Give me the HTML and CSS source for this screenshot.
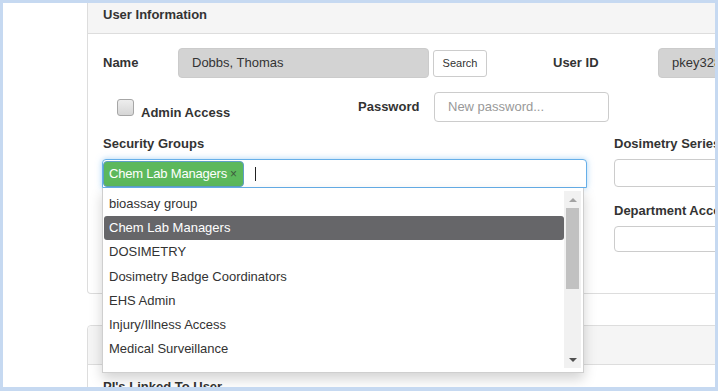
FILE: index.html
```html
<!DOCTYPE html>
<html>
<head>
<meta charset="utf-8">
<link rel="stylesheet" href="styles.css">
</head>
<body>
<div class="frame">
  <div class="panel panel-user">
    <div class="panel-heading">User Information</div>
    <div class="panel-body">
      <div class="row row-name">
        <label class="lbl lbl-name">Name</label>
        <div class="input input-ro input-name">Dobbs, Thomas</div>
        <button class="btn">Search</button>
        <label class="lbl lbl-userid">User ID</label>
        <div class="input input-ro input-userid">pkey3284</div>
      </div>
      <div class="row row-admin">
        <div class="check-group">
          <span class="checkbox"></span>
          <span class="lbl check-label">Admin Access</span>
        </div>
        <label class="lbl lbl-pass">Password</label>
        <div class="input input-pass"><span class="placeholder">New password...</span></div>
      </div>
      <div class="row row-groups">
        <div class="col-left">
          <div class="lbl col-label">Security Groups</div>
          <div class="select2">
            <span class="tag">Chem Lab Managers<span class="tag-x">×</span></span>
            <span class="cursor"></span>
            <div class="dropdown">
              <ul class="results">
                <li class="option">bioassay group</li>
                <li class="option option-active">Chem Lab Managers</li>
                <li class="option">DOSIMETRY</li>
                <li class="option">Dosimetry Badge Coordinators</li>
                <li class="option">EHS Admin</li>
                <li class="option">Injury/Illness Access</li>
                <li class="option">Medical Surveillance</li>
              </ul>
              <div class="scrollbar">
                <div class="sb-btn"><span class="arrow-up"></span></div>
                <div class="sb-thumb"></div>
                <div class="sb-space"></div>
                <div class="sb-btn sb-btn-down"><span class="arrow-down"></span></div>
              </div>
            </div>
          </div>
        </div>
        <div class="col-right">
          <div class="lbl">Dosimetry Series</div>
          <div class="input input-dos"></div>
          <div class="lbl lbl-dept">Department Access</div>
          <div class="input input-dept"></div>
        </div>
      </div>
    </div>
  </div>
  <div class="panel panel-pi">
    <div class="panel-heading heading-2"></div>
    <div class="panel-body body-2">
      <div class="lbl">PI's Linked To User</div>
    </div>
  </div>
</div>
</body>
</html>
```

FILE: styles.css
```css
* { box-sizing: border-box; }
html, body { margin: 0; padding: 0; }
body {
  font-family: "Liberation Sans", Arial, sans-serif;
  font-size: 13px;
  line-height: 18px;
  color: #333;
  background: #fff;
}
.frame {
  width: 718px;
  height: 391px;
  border-style: solid;
  border-color: #c6d9f1;
  border-width: 3px 3px 4px 3px;
  background: #fff;
  overflow: hidden;
  padding-left: 84px;
}
.panel {
  width: 660px;
  border: 1px solid #ddd;
  border-radius: 4px;
  background: #fff;
}
.panel-user {
  border-top: 0;
  border-radius: 0 0 4px 4px;
}
.panel-heading {
  height: 31px;
  padding: 3px 15px 0;
  background: #f5f5f5;
  border-bottom: 1px solid #ddd;
  font-weight: bold;
}
.panel-body {
  padding: 14px 15px 41px;
}
.lbl { font-weight: bold; white-space: nowrap; }
.row { display: flex; }
.row > *, .check-group > * { flex-shrink: 0; }
.row-name { height: 30px; align-items: center; }
.lbl-name { width: 75px; }
.input {
  border: 1px solid #ccc;
  border-radius: 4px;
  background: #fff;
  padding: 0 13px;
  white-space: nowrap;
  overflow: hidden;
}
.input-ro {
  background: #d3d3d3;
  border-color: #cbcbcb;
  height: 30px;
  line-height: 28px;
}
.input-name { width: 251px; }
.btn {
  margin-left: 4px;
  width: 54px;
  height: 27px;
  padding: 0;
  border: 1px solid #ccc;
  border-radius: 3px;
  background: #fff;
  color: #333;
  font-family: "Liberation Sans", Arial, sans-serif;
  font-size: 11px;
}
.lbl-userid { margin-left: 66px; width: 105px; }
.input-userid { width: 120px; }

.row-admin { margin-top: 14px; height: 30px; align-items: center; }
.check-group {
  width: 255px;
  display: flex;
  align-items: center;
  padding-left: 14px;
}
.checkbox {
  width: 17px;
  height: 17px;
  border: 1px solid #a6a6a6;
  border-radius: 3px;
  background: linear-gradient(#ededed, #d6d6d6);
}
.check-label { margin-left: 7px; margin-top: 11px; }
.lbl-pass { width: 76px; }
.input-pass { width: 175px; height: 30px; line-height: 28px; }
.placeholder { color: #999; }

.row-groups { margin-top: 13px; margin-left: -1px; }
.col-left { width: 485px; }
.col-label { padding-left: 1px; }
.select2 {
  position: relative;
  margin-top: 6px;
  height: 29px;
  border: 1px solid #66afe9;
  border-radius: 4px 4px 0 0;
  box-shadow: 0 0 6px rgba(102,175,233,.55);
  display: flex;
  align-items: flex-start;
  padding: 1px 0 0 0;
  background: #fff;
}
.tag {
  height: 26px;
  line-height: 24px;
  padding: 0 6px 0 5px;
  background: #5cb85c;
  border: 1px solid #5f9fc6;
  border-radius: 4px;
  color: #fff;
  white-space: nowrap;
  letter-spacing: -0.2px;
}
.tag-x {
  margin-left: 3px;
  color: #3d5a3d;
  font-size: 12px;
  letter-spacing: 0;
}
.cursor {
  margin-left: 11px;
  margin-top: 6px;
  width: 1px;
  height: 14px;
  background: #222;
}
.dropdown {
  position: absolute;
  top: 28px;
  left: -1px;
  width: 482px;
  height: 185px;
  background: #fff;
  border: 1px solid #cfcfcf;
  border-top: 0;
  box-shadow: 0 6px 12px rgba(0,0,0,.175);
  display: flex;
  z-index: 10;
}
.results {
  list-style: none;
  margin: 0 0 0 1px;
  padding: 3.75px 0 0 0;
  width: 460px;
  height: 184px;
  overflow: hidden;
}
.option {
  height: 24.25px;
  line-height: 24.25px;
  padding: 0 5px;
  white-space: nowrap;
}
.option-active {
  background: #666669;
  color: #fff;
  border-radius: 3px;
}
.scrollbar {
  width: 17px;
  height: 177px;
  margin: 3px 2px 0 0;
  background: #f1f1f1;
  display: flex;
  flex-direction: column;
}
.sb-btn {
  height: 17px;
  display: flex;
  align-items: center;
  justify-content: center;
}
.sb-btn-down { height: 16px; }
.arrow-up {
  width: 0; height: 0;
  border-left: 4px solid transparent;
  border-right: 4px solid transparent;
  border-bottom: 4px solid #a3a3a3;
}
.arrow-down {
  width: 0; height: 0;
  border-left: 4px solid transparent;
  border-right: 4px solid transparent;
  border-top: 4px solid #505050;
}
.sb-thumb {
  height: 81px;
  margin: 0 2px;
  background: #c1c1c1;
}
.sb-space { flex: 1; }

.col-right { margin-left: 27px; width: 120px; }
.input-dos { margin-top: 6px; height: 28px; width: 120px; }
.lbl-dept { margin-top: 15px; }
.input-dept { margin-top: 6px; height: 26px; width: 120px; }

.panel-pi { margin-top: 31px; }
.heading-2 { height: 39px; border-radius: 4px 4px 0 0; }
.body-2 { padding: 13px 15px; }
```
